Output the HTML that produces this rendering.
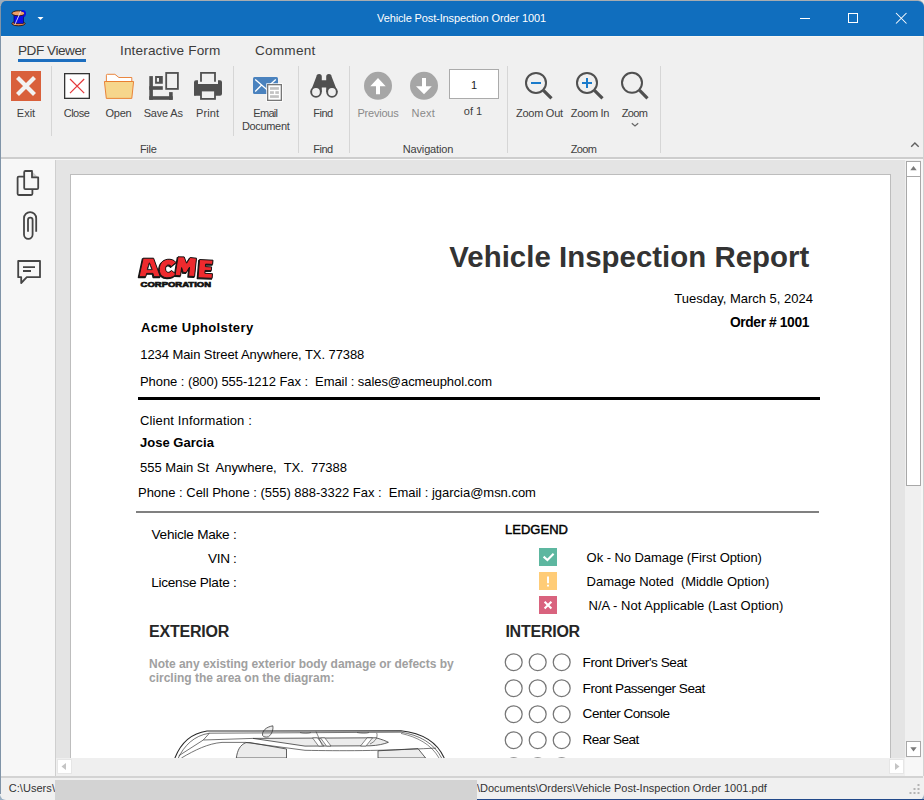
<!DOCTYPE html>
<html><head><meta charset="utf-8"><style>
html,body{margin:0;padding:0;}
body{width:924px;height:800px;overflow:hidden;position:relative;font-family:"Liberation Sans", sans-serif;}
.t{position:absolute;white-space:pre;}
svg{display:block;}
</style></head><body>
<div style="position:absolute;left:0px;top:0px;width:924px;height:800px;background:#98AFC3;"></div>
<div style="position:absolute;left:880px;top:0px;width:44px;height:30px;background:#E8E8E8;"></div>
<div style="position:absolute;left:0px;top:20px;width:924px;height:780px;background:#F0F0F0;border-radius:0 0 6px 6px;"></div>
<div style="position:absolute;left:0px;top:0px;width:924px;height:40px;background:#A8ACB0;border-radius:6px 6px 0 0;"></div>
<div style="position:absolute;left:0px;top:770px;width:1px;height:24px;background:#8094A8;"></div>
<div style="position:absolute;left:0px;top:6px;width:1px;height:770px;background:#8094A8;"></div>
<div style="position:absolute;left:923px;top:36px;width:1px;height:740px;background:#D4D4D4;"></div>
<div style="position:absolute;left:1px;top:1px;width:923px;height:35px;background:#106EBE;border-radius:5px 6px 0 0;"></div>
<div style="position:absolute;left:1px;top:36px;width:922px;height:1px;background:#F9F7F2;"></div>
<div style="position:absolute;left:1px;top:37px;width:922px;height:3px;background:#F0F0F0;"></div>
<div class="t" style="left:261.5px;width:400px;text-align:center;top:12.99px;font-size:11px;line-height:11px;color:#FFFFFF;font-weight:normal;letter-spacing:-0.123px;">Vehicle Post-Inspection Order 1001</div>
<svg style="position:absolute;left:0px;top:0px;" width="40" height="36" viewBox="0 0 40 36">
<ellipse cx="18.5" cy="23.6" rx="6.6" ry="2.2" fill="#E8844A" stroke="#2A1408" stroke-width="0.9"/>
<rect x="14" y="14.5" width="9.5" height="9" fill="#0C0CE8" stroke="#0A0A50" stroke-width="0.7"/>
<ellipse cx="18.5" cy="13.3" rx="6.6" ry="2.5" fill="#F0A068" stroke="#2A1408" stroke-width="0.9"/>
<path d="M21.5,10.8 Q25.8,10.5 25,14.5 Q24.5,16 23.5,16.5" stroke="#0C0CE8" stroke-width="1.8" fill="none"/>
<line x1="14.8" y1="24.8" x2="20.8" y2="11.2" stroke="#E0E0EE" stroke-width="0.9"/>
</svg>
<svg style="position:absolute;left:0px;top:0px;" width="60" height="36" viewBox="0 0 60 36"><path d="M37.5,17 L43.5,17 L40.5,20 Z" fill="#FFFFFF"/></svg>
<svg style="position:absolute;left:780px;top:0px;" width="144" height="36" viewBox="780 0 144 36">
<line x1="800" y1="18.5" x2="810" y2="18.5" stroke="#FFF" stroke-width="1"/>
<rect x="848.5" y="13.5" width="9" height="9" fill="none" stroke="#FFF" stroke-width="1"/>
<path d="M896,13 L906.5,23.5 M906.5,13 L896,23.5" stroke="#FFF" stroke-width="1.05"/>
</svg>
<div class="t" style="left:18px;top:43.69px;font-size:13.6px;line-height:13.6px;color:#3C3C3C;font-weight:normal;letter-spacing:-0.475px;">PDF Viewer</div>
<div class="t" style="left:120px;top:43.69px;font-size:13.6px;line-height:13.6px;color:#3C3C3C;font-weight:normal;letter-spacing:0.142px;">Interactive Form</div>
<div class="t" style="left:255px;top:43.69px;font-size:13.6px;line-height:13.6px;color:#3C3C3C;font-weight:normal;letter-spacing:0.223px;">Comment</div>
<div style="position:absolute;left:18px;top:59px;width:68px;height:3px;background:#1C6EBF;"></div>
<div style="position:absolute;left:51px;top:66px;width:1px;height:70px;background:#D6D6D6;"></div>
<div style="position:absolute;left:233px;top:66px;width:1px;height:70px;background:#D6D6D6;"></div>
<div style="position:absolute;left:298px;top:66px;width:1px;height:87px;background:#D6D6D6;"></div>
<div style="position:absolute;left:349px;top:66px;width:1px;height:87px;background:#D6D6D6;"></div>
<div style="position:absolute;left:507px;top:66px;width:1px;height:87px;background:#D6D6D6;"></div>
<div style="position:absolute;left:660px;top:66px;width:1px;height:87px;background:#D6D6D6;"></div>
<div class="t" style="left:-174px;width:400px;text-align:center;top:108.19px;font-size:11px;line-height:11px;color:#404040;font-weight:normal;">Exit</div>
<div class="t" style="left:-123.5px;width:400px;text-align:center;top:108.19px;font-size:11px;line-height:11px;color:#404040;font-weight:normal;letter-spacing:-0.525px;">Close</div>
<div class="t" style="left:-81.5px;width:400px;text-align:center;top:108.19px;font-size:11px;line-height:11px;color:#404040;font-weight:normal;letter-spacing:-0.234px;">Open</div>
<div class="t" style="left:-36.80000000000001px;width:400px;text-align:center;top:108.19px;font-size:11px;line-height:11px;color:#404040;font-weight:normal;letter-spacing:-0.199px;">Save As</div>
<div class="t" style="left:7.599999999999994px;width:400px;text-align:center;top:108.19px;font-size:11px;line-height:11px;color:#404040;font-weight:normal;letter-spacing:0.075px;">Print</div>
<div class="t" style="left:65.30000000000001px;width:400px;text-align:center;top:108.19px;font-size:11px;line-height:11px;color:#404040;font-weight:normal;letter-spacing:-0.700px;">Email</div>
<div class="t" style="left:65.69999999999999px;width:400px;text-align:center;top:120.99px;font-size:11px;line-height:11px;color:#404040;font-weight:normal;letter-spacing:-0.332px;">Document</div>
<div class="t" style="left:123px;width:400px;text-align:center;top:108.19px;font-size:11px;line-height:11px;color:#404040;font-weight:normal;letter-spacing:-0.477px;">Find</div>
<div class="t" style="left:178px;width:400px;text-align:center;top:108.49px;font-size:11px;line-height:11px;color:#8A8A8A;font-weight:normal;letter-spacing:-0.227px;">Previous</div>
<div class="t" style="left:223.3px;width:400px;text-align:center;top:108.49px;font-size:11px;line-height:11px;color:#8A8A8A;font-weight:normal;letter-spacing:0.219px;">Next</div>
<div class="t" style="left:273px;width:400px;text-align:center;top:106.49px;font-size:11px;line-height:11px;color:#404040;font-weight:normal;">of 1</div>
<div class="t" style="left:339.4px;width:400px;text-align:center;top:108.49px;font-size:11px;line-height:11px;color:#404040;font-weight:normal;letter-spacing:-0.242px;">Zoom Out</div>
<div class="t" style="left:390px;width:400px;text-align:center;top:108.49px;font-size:11px;line-height:11px;color:#404040;font-weight:normal;letter-spacing:-0.268px;">Zoom In</div>
<div class="t" style="left:434.5px;width:400px;text-align:center;top:108.49px;font-size:11px;line-height:11px;color:#404040;font-weight:normal;letter-spacing:-0.656px;">Zoom</div>
<div class="t" style="left:-51.80000000000001px;width:400px;text-align:center;top:143.99px;font-size:11px;line-height:11px;color:#404040;font-weight:normal;letter-spacing:-0.305px;">File</div>
<div class="t" style="left:123px;width:400px;text-align:center;top:143.99px;font-size:11px;line-height:11px;color:#404040;font-weight:normal;letter-spacing:-0.477px;">Find</div>
<div class="t" style="left:228px;width:400px;text-align:center;top:143.99px;font-size:11px;line-height:11px;color:#404040;font-weight:normal;letter-spacing:-0.150px;">Navigation</div>
<div class="t" style="left:383.5px;width:400px;text-align:center;top:143.99px;font-size:11px;line-height:11px;color:#404040;font-weight:normal;letter-spacing:-0.656px;">Zoom</div>
<svg style="position:absolute;left:0px;top:60px;" width="924" height="100" viewBox="0 60 924 100">
<!-- Exit -->
<rect x="11" y="71" width="30" height="30" fill="#D9603B"/>
<path d="M17.5,77.5 L34.5,94.5 M34.5,77.5 L17.5,94.5" stroke="#F2F2F2" stroke-width="4.2"/>
<!-- Close -->
<rect x="64.65" y="73.65" width="24.7" height="24.7" fill="#FFFFFF" stroke="#333" stroke-width="1.3"/>
<path d="M70,79 L84.2,93.2 M84.2,79 L70,93.2" stroke="#E5383B" stroke-width="1.2"/>
<!-- Open -->
<path d="M106.4,81.5 L106.4,75.2 Q106.4,74.3 107.3,74.3 L114.9,74.3 L118.9,77.5 L131.8,77.5 L131.8,81.5 Z" fill="#FFFFFF" stroke="#E8792A" stroke-width="0.9"/>
<path d="M104.4,81.5 L133.6,81.5 L131.8,98.4 L106.3,98.4 Z" fill="#F6D68C" stroke="#E8792A" stroke-width="0.9"/>
<!-- Save As -->
<g fill="#505050">
<rect x="149.3" y="76.1" width="3.6" height="23.7"/>
<rect x="149.3" y="96.2" width="23.4" height="3.6"/>
<rect x="169.1" y="92.1" width="3.6" height="7.7"/>
<rect x="149.3" y="86.2" width="13.5" height="3.6"/>
<path d="M155.1,76.1 h7.7 v7.7 h-7.7 Z M156.9,77.9 v3.8 h2.1 v-3.8 Z" fill-rule="evenodd"/>
</g>
<rect x="166.2" y="72.95" width="11.7" height="15.95" fill="none" stroke="#505050" stroke-width="1.8"/>
<!-- Print -->
<path d="M201,81.7 L201,72.9 L215,72.9 L215,81.7" fill="none" stroke="#505050" stroke-width="1.8"/>
<path d="M196,80.2 L198,80.2 L198,84 L218,84 L218,80.2 L220,80.2 Q222,80.2 222,82.2 L222,93.7 Q222,95.7 220,95.7 L194,95.7 L194,82.2 Q194,80.2 196,80.2 Z" fill="#505050"/>
<path d="M194,93 L194,93.7 Q194,95.7 196,95.7" fill="#505050"/>
<rect x="201" y="90.5" width="14" height="8.4" fill="#F0F0F0" stroke="#505050" stroke-width="1.8"/>
<!-- Email -->
<rect x="253" y="77" width="25" height="16.9" rx="1.5" fill="#4A82BE"/>
<path d="M255.2,79.5 L268,90.5 M275.8,79.5 L268,86.5 M261.4,85.3 L255.2,91.5" stroke="#FFFFFF" stroke-width="1.3" fill="none"/>
<rect x="266.3" y="83.3" width="16.4" height="18.4" fill="#FFFFFF"/>
<rect x="267.65" y="84.65" width="13.7" height="15.7" fill="#FFFFFF" stroke="#777" stroke-width="1.3"/>
<g fill="#C2C2C2"><rect x="270" y="87.1" width="8.9" height="2.7"/><rect x="270" y="91.2" width="3.9" height="2.7"/><rect x="275.3" y="91.2" width="3.6" height="2.7"/><rect x="270" y="95.2" width="8.9" height="2.7"/></g>
<!-- Find -->
<path d="M310.5,92 L316.4,76.6 A2.7,2.7 0 0 1 321.8,76.6 L321.8,80.2 L326.2,80.2 L326.2,76.6 A2.7,2.7 0 0 1 331.6,76.6 L337.6,92 L326.2,92 L326.2,87.6 L321.8,87.6 L321.8,92 Z" fill="#505050"/>
<circle cx="316" cy="92" r="4.85" fill="#F0F0F0" stroke="#505050" stroke-width="1.9"/>
<circle cx="332" cy="92" r="4.85" fill="#F0F0F0" stroke="#505050" stroke-width="1.9"/>
<!-- Previous / Next -->
<circle cx="378" cy="85.8" r="14" fill="#A6A6A6"/>
<path d="M378,77.9 L385.7,86.2 L380,86.2 L380,94.2 L376,94.2 L376,86.2 L370.3,86.2 Z" fill="#FFFFFF"/>
<circle cx="424" cy="85.8" r="14" fill="#A6A6A6"/>
<path d="M424,94.2 L431.8,86.2 L426,86.2 L426,77.9 L422,77.9 L422,86.2 L416,86.2 Z" fill="#FFFFFF"/>
<!-- page box -->
<rect x="449.5" y="69.5" width="49" height="29" fill="#FFFFFF" stroke="#ABABAB" stroke-width="1"/>
<!-- zoom icons -->
<g fill="none" stroke="#505050">
<circle cx="536" cy="82.9" r="10" stroke-width="2"/><path d="M543.4,90.3 L551.5,98.4" stroke-width="3.2"/>
<circle cx="587" cy="82.9" r="10" stroke-width="2"/><path d="M594.4,90.3 L602.5,98.4" stroke-width="3.2"/>
<circle cx="632" cy="82.8" r="10" stroke-width="2"/><path d="M639.4,90.2 L647.5,98.3" stroke-width="3.2"/>
</g>
<path d="M531,83 L541,83" stroke="#1A7BCB" stroke-width="2"/>
<path d="M582,82.9 L592,82.9 M587,77.9 L587,87.9" stroke="#1A7BCB" stroke-width="2"/>
<path d="M631.8,123.2 L635,126 L638.2,123.2" fill="none" stroke="#666" stroke-width="1.2"/>
<path d="M911.2,146.7 L914.9,143 L918.7,146.7" fill="none" stroke="#606060" stroke-width="1.4"/>
</svg>
<div class="t" style="left:274px;width:400px;text-align:center;top:79.69px;font-size:11px;line-height:11px;color:#222;font-weight:normal;">1</div>
<div style="position:absolute;left:1px;top:157px;width:922px;height:2px;background:#CDCDCD;"></div>
<div style="position:absolute;left:1px;top:159px;width:922px;height:1px;background:#F8F8F8;"></div>
<div style="position:absolute;left:1px;top:160px;width:54px;height:616px;background:#F7F7F7;"></div>
<div style="position:absolute;left:55px;top:160px;width:1px;height:616px;background:#CFCFCF;"></div>
<svg style="position:absolute;left:0px;top:160px;" width="56" height="140" viewBox="0 160 56 140">
<path d="M32,171.2 L38.2,177.4 L32,177.4 Z" fill="#C8C8C8"/>
<path d="M38.2,177.4 L38.2,188 Q38.2,189.2 37,189.2 L25.4,189.2 Q24.2,189.2 24.2,188 L24.2,172.2 Q24.2,171 25.4,171 L32,171 L32,177.4 Z" fill="none" stroke="#454545" stroke-width="1.8" stroke-linejoin="round"/>
<path d="M24.2,176.6 L18.8,176.6 Q17.6,176.6 17.6,177.8 L17.6,193.8 Q17.6,195 18.8,195 L31.2,195 Q32.4,195 32.4,193.8 L32.4,189.2" fill="none" stroke="#454545" stroke-width="1.8"/>
<path d="M36.2,231.8 L36.2,218.3 A6.1,6.1 0 0 0 24,218.3 L24,234.5 A4.3,4.3 0 0 0 32.6,234.5 L32.6,220 A2.3,2.3 0 0 0 28,220 L28,231.8" fill="none" stroke="#454545" stroke-width="1.8"/>
<path d="M18.2,261 L40,261 L40,277.2 L26.8,277.2 L21.2,283 L21.2,277.2 L18.2,277.2 Z" fill="none" stroke="#454545" stroke-width="1.8" stroke-linejoin="round"/>
<path d="M23,267.2 L35,267.2 M23,271 L31,271" stroke="#454545" stroke-width="1.8"/>
</svg>
<div style="position:absolute;left:56px;top:160px;width:849px;height:598px;background:#E4E4E4;"></div>
<div style="position:absolute;left:70px;top:174px;width:821px;height:600px;background:#FFFFFF;box-shadow:inset 0 0 0 1px #BDBDBD;"></div>
<div style="position:absolute;left:70px;top:174px;width:821px;height:1px;background:#BDBDBD;"></div>
<svg style="position:absolute;left:130px;top:245px;" width="100" height="50" viewBox="130 245 100 50">
<g fill="#151515" stroke="#151515" stroke-width="1.3" stroke-linejoin="round" transform="translate(-0.7,0.8)">
<path d="M139.1,276.7 L143.1,258.2 L153.6,258.2 L160.3,276.7 L153.8,276.7 L153,273.4 L146.6,273.4 L145.8,276.7 Z"/>
<path d="M176,262.5 C174,259.5 170.5,259 167.5,259.3 C162,260 159.3,264.5 159.3,269.5 C159.3,275 163,278 168,277.8 C171.5,277.7 174.5,276.5 176,274 L171.5,270.5 C170.5,271.8 169.5,272.3 168.3,272.3 C166.5,272.3 165.6,270.8 165.6,268.8 C165.6,266.5 166.8,265 168.5,265 C169.7,265 170.6,265.6 171.3,266.5 Z"/>
<path d="M175,275.5 L178,256.8 L184.2,256.9 L186.6,263.2 L190.2,257.5 L196.5,258.2 L194.6,276.5 L188.6,276.2 L189.5,267.2 L186.2,272.6 L183.2,272.4 L181.6,267.6 L180.6,275.8 Z"/>
<path d="M198,277.8 L199.5,259.5 L213,260.2 L212.6,264.4 L205.6,264.1 L205.4,266.6 L211.6,266.9 L211.3,270.6 L205.1,270.4 L204.9,273.3 L212.5,273.7 L212.1,278.3 Z"/>
</g>
<g fill="#EE2A2E" stroke="#151515" stroke-width="1" stroke-linejoin="round">
<path d="M139.1,276.7 L143.1,258.2 L153.6,258.2 L160.3,276.7 L153.8,276.7 L153,273.4 L146.6,273.4 L145.8,276.7 Z M147.3,269.6 L152.1,269.6 L149.4,262.8 Z" fill-rule="evenodd"/>
<path d="M176,262.5 C174,259.5 170.5,259 167.5,259.3 C162,260 159.3,264.5 159.3,269.5 C159.3,275 163,278 168,277.8 C171.5,277.7 174.5,276.5 176,274 L171.5,270.5 C170.5,271.8 169.5,272.3 168.3,272.3 C166.5,272.3 165.6,270.8 165.6,268.8 C165.6,266.5 166.8,265 168.5,265 C169.7,265 170.6,265.6 171.3,266.5 Z"/>
<path d="M175,275.5 L178,256.8 L184.2,256.9 L186.6,263.2 L190.2,257.5 L196.5,258.2 L194.6,276.5 L188.6,276.2 L189.5,267.2 L186.2,272.6 L183.2,272.4 L181.6,267.6 L180.6,275.8 Z"/>
<path d="M198,277.8 L199.5,259.5 L213,260.2 L212.6,264.4 L205.6,264.1 L205.4,266.6 L211.6,266.9 L211.3,270.6 L205.1,270.4 L204.9,273.3 L212.5,273.7 L212.1,278.3 Z"/>
</g>
<path d="M147.6,269.4 L151.8,269.4 L149.4,263.2 Z" fill="#FFFFFF" stroke="#151515" stroke-width="0.8"/>
<text x="140.6" y="286.7" font-family="Liberation Sans" font-weight="bold" font-size="7.5" fill="#111" stroke="#111" stroke-width="0.7" textLength="70.4" lengthAdjust="spacingAndGlyphs">CORPORATION</text>
</svg>
<div class="t" style="left:449.3px;top:241.61px;font-size:29.4px;line-height:29.4px;color:#333333;font-weight:bold;letter-spacing:0.028px;">Vehicle Inspection Report</div>
<div class="t" style="right:111px;top:292.00px;font-size:13px;line-height:13px;color:#000000;font-weight:normal;">Tuesday, March 5, 2024</div>
<div class="t" style="right:115px;top:315.92px;font-size:13.8px;line-height:13.8px;color:#000000;font-weight:bold;letter-spacing:-0.383px;">Order # 1001</div>
<div class="t" style="left:141px;top:321.00px;font-size:13px;line-height:13px;color:#000000;font-weight:bold;letter-spacing:0.371px;">Acme Upholstery</div>
<div class="t" style="left:140.3px;top:348.40px;font-size:13px;line-height:13px;color:#000000;font-weight:normal;letter-spacing:-0.076px;">1234 Main Street Anywhere, TX. 77388</div>
<div class="t" style="left:140px;top:375.30px;font-size:13px;line-height:13px;color:#000000;font-weight:normal;letter-spacing:-0.067px;">Phone : (800) 555-1212 Fax :  Email : sales@acmeuphol.com</div>
<div style="position:absolute;left:138px;top:397px;width:682px;height:3px;background:#000;"></div>
<div class="t" style="left:140px;top:413.70px;font-size:13px;line-height:13px;color:#000000;font-weight:normal;letter-spacing:0.144px;">Client Information :</div>
<div class="t" style="left:140px;top:435.80px;font-size:13px;line-height:13px;color:#000000;font-weight:bold;letter-spacing:0.024px;">Jose Garcia</div>
<div class="t" style="left:140px;top:460.80px;font-size:13px;line-height:13px;color:#000000;font-weight:normal;letter-spacing:-0.027px;">555 Main St  Anywhere,  TX.  77388</div>
<div class="t" style="left:138px;top:485.80px;font-size:13px;line-height:13px;color:#000000;font-weight:normal;letter-spacing:-0.017px;">Phone : Cell Phone : (555) 888-3322 Fax :  Email : jgarcia@msn.com</div>
<div style="position:absolute;left:136px;top:511px;width:683px;height:2px;background:#808080;"></div>
<div class="t" style="right:687.5px;top:528.29px;font-size:13.6px;line-height:13.6px;color:#000000;font-weight:normal;letter-spacing:-0.244px;">Vehicle Make :</div>
<div class="t" style="right:687.5px;top:551.69px;font-size:13.6px;line-height:13.6px;color:#000000;font-weight:normal;letter-spacing:-0.344px;">VIN :</div>
<div class="t" style="right:687.5px;top:576.29px;font-size:13.6px;line-height:13.6px;color:#000000;font-weight:normal;letter-spacing:-0.259px;">License Plate :</div>
<div class="t" style="left:505px;top:522.90px;font-size:13px;line-height:13px;color:#000000;font-weight:normal;letter-spacing:0.020px;-webkit-text-stroke:0.45px #000;">LEDGEND</div>
<svg style="position:absolute;left:530px;top:540px;" width="40" height="80" viewBox="530 540 40 80">
<rect x="539" y="548" width="18" height="18" fill="#5DB7A0"/>
<path d="M543.6,556.6 L547.4,560 L553.6,553.7" fill="none" stroke="#FFF" stroke-width="2.1"/>
<rect x="539" y="572" width="18" height="18" fill="#FFCC77"/>
<path d="M548,576.6 L548,583.2 M548,584.8 L548,586.4" stroke="#FFF" stroke-width="2"/>
<rect x="539" y="596" width="18" height="18" fill="#D9637E"/>
<path d="M544.6,601.8 L551.4,608.4 M551.4,601.8 L544.6,608.4" stroke="#FFF" stroke-width="2.1"/>
</svg>
<div class="t" style="left:586.6px;top:551.00px;font-size:13px;line-height:13px;color:#000000;font-weight:normal;letter-spacing:-0.059px;">Ok - No Damage (First Option)</div>
<div class="t" style="left:586.6px;top:574.80px;font-size:13px;line-height:13px;color:#000000;font-weight:normal;letter-spacing:-0.027px;">Damage Noted  (Middle Option)</div>
<div class="t" style="left:588.5px;top:599.30px;font-size:13px;line-height:13px;color:#000000;font-weight:normal;letter-spacing:0.012px;">N/A - Not Applicable (Last Option)</div>
<div class="t" style="left:148.9px;top:623.56px;font-size:16px;line-height:16px;color:#262626;font-weight:bold;letter-spacing:-0.179px;">EXTERIOR</div>
<div class="t" style="left:505.4px;top:624.06px;font-size:16px;line-height:16px;color:#262626;font-weight:bold;letter-spacing:-0.238px;">INTERIOR</div>
<div class="t" style="left:149px;top:658.14px;font-size:12px;line-height:12px;color:#A0A0A0;font-weight:bold;letter-spacing:-0.014px;">Note any existing exterior body damage or defects by</div>
<div class="t" style="left:149px;top:671.64px;font-size:12px;line-height:12px;color:#A0A0A0;font-weight:bold;">circling the area on the diagram:</div>
<svg style="position:absolute;left:500px;top:645px;" width="80" height="113" viewBox="500 645 80 113"><circle cx="513.7" cy="662.2" r="8.45" fill="none" stroke="#767676" stroke-width="1.25"/><circle cx="537.7" cy="662.2" r="8.45" fill="none" stroke="#767676" stroke-width="1.25"/><circle cx="561.7" cy="662.2" r="8.45" fill="none" stroke="#767676" stroke-width="1.25"/><circle cx="513.7" cy="688.2" r="8.45" fill="none" stroke="#767676" stroke-width="1.25"/><circle cx="537.7" cy="688.2" r="8.45" fill="none" stroke="#767676" stroke-width="1.25"/><circle cx="561.7" cy="688.2" r="8.45" fill="none" stroke="#767676" stroke-width="1.25"/><circle cx="513.7" cy="714.2" r="8.45" fill="none" stroke="#767676" stroke-width="1.25"/><circle cx="537.7" cy="714.2" r="8.45" fill="none" stroke="#767676" stroke-width="1.25"/><circle cx="561.7" cy="714.2" r="8.45" fill="none" stroke="#767676" stroke-width="1.25"/><circle cx="513.7" cy="740.2" r="8.45" fill="none" stroke="#767676" stroke-width="1.25"/><circle cx="537.7" cy="740.2" r="8.45" fill="none" stroke="#767676" stroke-width="1.25"/><circle cx="561.7" cy="740.2" r="8.45" fill="none" stroke="#767676" stroke-width="1.25"/><circle cx="513.7" cy="766.2" r="8.45" fill="none" stroke="#767676" stroke-width="1.25"/><circle cx="537.7" cy="766.2" r="8.45" fill="none" stroke="#767676" stroke-width="1.25"/><circle cx="561.7" cy="766.2" r="8.45" fill="none" stroke="#767676" stroke-width="1.25"/></svg>
<div class="t" style="left:582.6px;top:655.59px;font-size:13.6px;line-height:13.6px;color:#000000;font-weight:normal;letter-spacing:-0.453px;">Front Driver's Seat</div>
<div class="t" style="left:582.6px;top:681.79px;font-size:13.6px;line-height:13.6px;color:#000000;font-weight:normal;letter-spacing:-0.503px;">Front Passenger Seat</div>
<div class="t" style="left:582.6px;top:707.29px;font-size:13.6px;line-height:13.6px;color:#000000;font-weight:normal;letter-spacing:-0.533px;">Center Console</div>
<div class="t" style="left:582.6px;top:732.99px;font-size:13.6px;line-height:13.6px;color:#000000;font-weight:normal;letter-spacing:-0.558px;">Rear Seat</div>
<svg style="position:absolute;left:160px;top:715px;" width="300" height="43" viewBox="160 715 300 43">
<g stroke="#3A3A3A" stroke-width="0.8" fill="none" stroke-linejoin="round">
<path d="M236.3,758 C237.5,750 240,745 246,742.6 L250,742.6 L286.5,749 L286.5,758 Z" fill="#ECECEC"/>
<path d="M378,758 L378,750.8 L418,748.6 L425.6,758 Z" fill="#ECECEC"/>
<path d="M253,738.4 L376,737.8 C382,739.5 386,741 388.4,742.3 C384,744 378,745.5 370,745.8 L305,746.1 Z" fill="#ECECEC"/>
<path d="M312.5,737.9 L317.5,737.9 L324,746 L318.5,746 Z M320.5,737.9 L324.8,737.9 L331,746 L326.5,746 Z M360.5,746 L366,746 L372.5,737.9 L367,737.9 Z" fill="#FFFFFF" stroke-width="0.6"/>
<path d="M316,731.5 L322.5,746" stroke-width="0.6"/>
<path d="M262.6,735.5 C261.8,731 266,727 272.8,725.8 C273.5,729.5 272,734 268.5,736.8 C266,737.5 263.5,737 262.6,735.5 Z" fill="#ECECEC"/>
<path d="M174.9,758 C180,745 190,733.5 207,731 L401,730.8 C421,733 437,742 444.2,758" stroke-width="1.1" stroke="#2A2A2A"/>
<path d="M178.3,758 C184,746 194,735.5 209.4,733.2 L401,732.2 C419,735 434,743 441.6,758" stroke-width="0.7"/>
<path d="M401,733.4 C417,737 431,744 439,758" stroke-width="0.6"/>
<path d="M209.4,733.2 L203.3,740 L178.7,755.8 M203.3,740 L253,738.4" stroke-width="0.7"/>
<path d="M181.4,758 C195,750 208,743.5 222,742.4 L245.6,742.4 L305,750.3 C340,751 380,751 433.2,748.2 L436,748.2" stroke-width="0.7"/>
<path d="M376.7,733 C378,737 376,741 370,744" stroke-width="0.6"/>
<path d="M300,732.5 C303,733.5 309,733.5 311,732.5 M357,732.5 C361,733.5 367,733.5 369,732.5" stroke-width="0.6"/>
</g>
</svg>
<div style="position:absolute;left:905px;top:160px;width:18px;height:616px;background:#F0F0F0;"></div>
<div style="position:absolute;left:921px;top:160px;width:2px;height:616px;background:#F7F7F7;"></div>
<div style="position:absolute;left:906px;top:161px;width:15px;height:16px;background:#FFFFFF;box-shadow:inset 0 0 0 1px #A8A8A8;"></div>
<svg style="position:absolute;left:905px;top:160px;" width="18" height="20" viewBox="905 160 18 20"><path d="M910.3,170.2 L913.5,166 L916.7,170.2 Z" fill="#7A7A7A"/></svg>
<div style="position:absolute;left:906px;top:176px;width:15px;height:310px;background:#FFFFFF;box-shadow:inset 0 0 0 1px #A8A8A8;"></div>
<div style="position:absolute;left:906px;top:741px;width:15px;height:16px;background:#FFFFFF;box-shadow:inset 0 0 0 1px #A8A8A8;"></div>
<svg style="position:absolute;left:905px;top:740px;" width="18" height="20" viewBox="905 740 18 20"><path d="M910.3,747.3 L913.5,751.5 L916.7,747.3 Z" fill="#7A7A7A"/></svg>
<div style="position:absolute;left:56px;top:758px;width:849px;height:18px;background:#EFEFEF;"></div>
<div style="position:absolute;left:57px;top:759px;width:15px;height:15px;background:#FFFFFF;box-shadow:inset 0 0 0 1px #E6E6E6;"></div>
<svg style="position:absolute;left:56px;top:758px;" width="20" height="18" viewBox="56 758 20 18"><path d="M61.5,766.5 L66,763 L66,770 Z" fill="#C4C4C4"/></svg>
<div style="position:absolute;left:889px;top:759px;width:15px;height:15px;background:#FFFFFF;box-shadow:inset 0 0 0 1px #E6E6E6;"></div>
<svg style="position:absolute;left:885px;top:758px;" width="20" height="18" viewBox="885 758 20 18"><path d="M899.5,766.5 L895,763 L895,770 Z" fill="#C4C4C4"/></svg>
<div style="position:absolute;left:905px;top:758px;width:18px;height:18px;background:#F7F7F7;"></div>
<div style="position:absolute;left:1px;top:776px;width:922px;height:2px;background:#D3D3D3;"></div>
<div style="position:absolute;left:1px;top:778px;width:922px;height:20px;background:#F0F0F0;border-radius:0 0 5px 5px;"></div>
<div class="t" style="left:8.7px;top:782.69px;font-size:11px;line-height:11px;color:#333333;font-weight:normal;letter-spacing:0.051px;">C:\Users\</div>
<div class="t" style="left:477px;top:782.69px;font-size:11px;line-height:11px;color:#333333;font-weight:normal;">\Documents\Orders\Vehicle Post-Inspection Order 1001.pdf</div>
<div style="position:absolute;left:55px;top:780px;width:422px;height:20px;background:#D3D3D3;"></div>
<div style="position:absolute;left:477px;top:798.5px;width:447px;height:2px;background:#22498A;"></div>
<svg style="position:absolute;left:900px;top:780px;" width="24" height="20" viewBox="900 780 24 20"><g fill="#B4B4B4">
<rect x="917.5" y="784" width="2" height="2"/>
<rect x="913.5" y="788" width="2" height="2"/><rect x="917.5" y="788" width="2" height="2"/>
<rect x="909.5" y="792" width="2" height="2"/><rect x="913.5" y="792" width="2" height="2"/><rect x="917.5" y="792" width="2" height="2"/>
</g></svg>
</body></html>
